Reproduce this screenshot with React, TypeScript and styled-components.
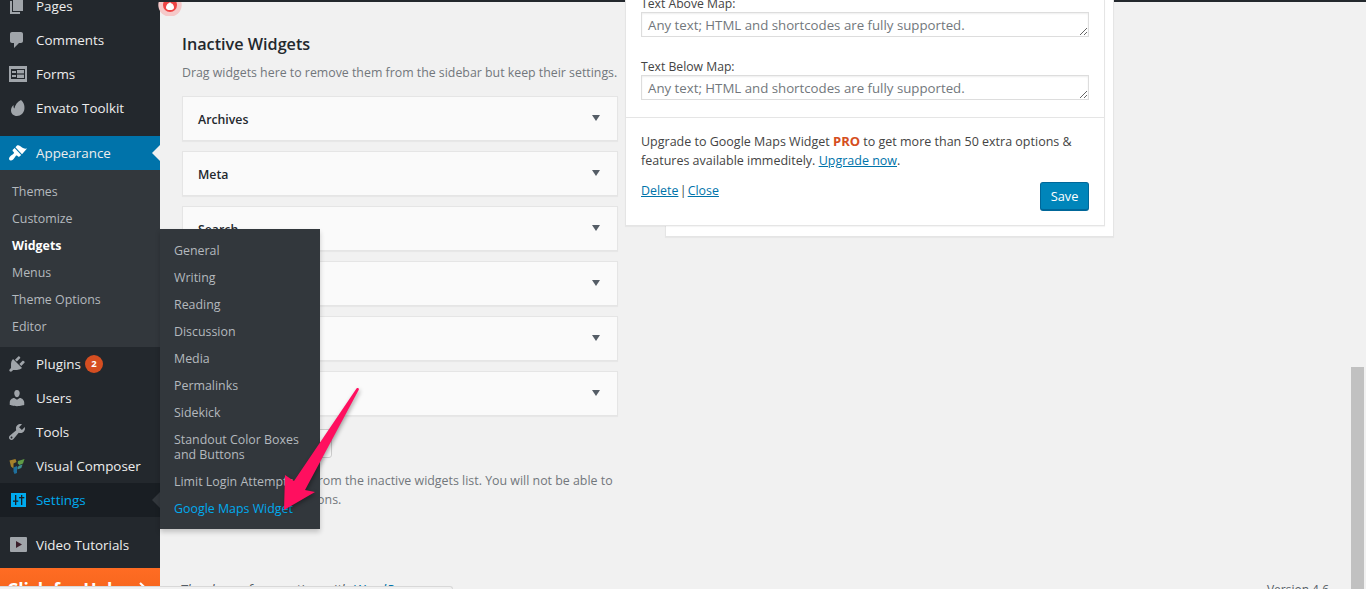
import React from "react";
import styled, { createGlobalStyle } from "styled-components";

const Global = createGlobalStyle`
  html, body { margin: 0; padding: 0; height: 589px; overflow: hidden; background: #f1f1f1; }
  * { box-sizing: border-box; }
  body { font-family: "Open Sans", "Noto Sans", sans-serif; font-size: 13px; color: #444; }
`;

const Page = styled.div`
  position: relative;
  display: flex;
  width: 1366px;
  height: 589px;
  overflow: hidden;
`;

const Sidebar = styled.nav`
  position: relative;
  flex: 0 0 160px;
  display: flex;
  flex-direction: column;
  background: #23282d;
  margin-top: -11px;
`;

const MenuItem = styled.div<{ $state?: "current" | "open" }>`
  position: relative;
  display: flex;
  align-items: center;
  flex: 0 0 34px;
  padding-left: 7px;
  gap: 9px;
  font-size: 13.4px;
  color: ${(p) => (p.$state === "open" ? "#00aaee" : "#eee")};
  background: ${(p) => (p.$state === "current" ? "#0073aa" : p.$state === "open" ? "#191e23" : "transparent")};
  svg { flex: 0 0 20px; }
  ${(p) =>
    p.$state
      ? `&::after {
          content: "";
          position: absolute;
          right: 0;
          top: 50%;
          margin-top: -8px;
          border: 8px solid transparent;
          border-left-width: 0;
          border-right-color: ${p.$state === "current" ? "#f1f1f1" : "#32373c"};
        }`
      : ""}
`;

const Separator = styled.div`
  flex: 0 0 11px;
`;

const SubMenu = styled.div`
  display: flex;
  flex-direction: column;
  background: #32373c;
  padding: 8px 0 7px;
`;

const SubItem = styled.div<{ $bold?: boolean; $active?: boolean; $inset?: boolean }>`
  padding: 6px ${(p) => (p.$inset ? "14px" : "12px")};
  font-size: 12.4px;
  line-height: 15px;
  font-weight: ${(p) => (p.$bold ? 700 : 400)};
  color: ${(p) => (p.$active ? "#00aaee" : p.$bold ? "#fff" : "#b4b9be")};
`;

const Flyout = styled(SubMenu)`
  position: absolute;
  left: 160px;
  top: 229px;
  width: 160px;
  z-index: 5;
  box-shadow: 0 3px 5px rgba(0, 0, 0, 0.2);
`;

const HelpBar = styled.div`
  margin-top: 6px;
  flex: 0 0 40px;
  display: flex;
  justify-content: space-between;
  align-items: flex-start;
  padding: 9px 12px 0 7px;
  background: linear-gradient(#ff6c23, #f0621a);
  color: #fff;
  font-size: 17.5px;
  font-weight: 700;
  line-height: 24px;
`;

const HelpChevron = styled.svg`
  margin-top: 5px;
`;

const Badge = styled.span`
  display: inline-block;
  width: 18px;
  height: 18px;
  border-radius: 50%;
  margin-left: -5px;
  background: #d54e21;
  color: #fff;
  font-size: 9.5px;
  font-weight: 700;
  line-height: 18px;
  text-align: center;
`;

const Main = styled.main`
  flex: 1;
  display: flex;
  flex-direction: column;
  border-top: 2px solid #23282d;
  min-width: 0;
`;

const Columns = styled.div`
  flex: 1;
  display: flex;
  align-items: flex-start;
  min-height: 0;
`;

const LeftColumn = styled.section`
  flex: 0 0 436px;
  margin-left: 22px;
  padding-top: 30px;
`;

const Heading = styled.h2`
  margin: 0 0 7px;
  font-size: 16.2px;
  line-height: 24px;
  font-weight: 600;
  color: #23282d;
`;

const Description = styled.p`
  margin: 0 0 13px;
  font-size: 12.35px;
  line-height: 20px;
  color: #72777c;
  white-space: nowrap;
`;

const WidgetList = styled.div`
  display: flex;
  flex-direction: column;
  gap: 10px;
`;

const WidgetRow = styled.div`
  display: flex;
  align-items: center;
  justify-content: space-between;
  height: 45px;
  padding: 2px 17px 0 15px;
  background: #fafafa;
  border: 1px solid #e5e5e5;
  box-shadow: 0 1px 1px rgba(0, 0, 0, 0.04);
  font-size: 12.3px;
  font-weight: 600;
  color: #23282d;
`;

const Caret = styled.span`
  width: 0;
  height: 0;
  margin-top: -4px;
  border-left: 4.5px solid transparent;
  border-right: 4.5px solid transparent;
  border-top: 6px solid #555d66;
`;

const ClearButton = styled.button`
  display: block;
  margin-top: 13px;
  width: 150px;
  height: 29px;
  border: 1px solid #ccc;
  border-radius: 3px;
  background: #f7f7f7;
  font: inherit;
  color: #555;
`;

const Note = styled.p`
  margin: 13px 0 0;
  font-size: 12.4px;
  line-height: 19px;
  color: #72777c;
`;

const Holder = styled.section`
  margin: -2px 0 0 47px;
  width: 449px;
  background: #fff;
  border-right: 1px solid #e5e5e5;
  border-bottom: 1px solid #e5e5e5;
  border-left: 1px solid #e5e5e5;
  box-shadow: 0 1px 1px rgba(0, 0, 0, 0.04);
  padding-bottom: 10px;
`;

const Card = styled.div`
  margin-left: -41px;
  width: 480px;
  height: 226px;
  display: flex;
  flex-direction: column;
  background: #fff;
  border: 1px solid #e5e5e5;
  border-top: 0;
  box-shadow: 0 1px 1px rgba(0, 0, 0, 0.04);
`;

const Fields = styled.div`
  padding: 0 15px;
  border-bottom: 1px solid #e5e5e5;
  margin-top: -6px;
  flex: 0 0 124px;
  min-height: 0;
`;

const Label = styled.label`
  display: block;
  height: 18px;
  font-size: 12.2px;
  line-height: 20px;
  color: #444;
`;

const Area = styled.textarea`
  display: block;
  width: 448px;
  height: 25px;
  margin-bottom: 20px;
  padding: 3px 6px 1px;
  resize: vertical;
  overflow: hidden;
  border: 1px solid #ddd;
  box-shadow: inset 0 1px 2px rgba(0, 0, 0, 0.07);
  font-family: inherit;
  font-size: 13.25px;
  line-height: 19px;
  color: #32373c;
  background: #fff;
  &::placeholder { color: #72777c; opacity: 1; }
`;

const Upgrade = styled.p`
  margin: 14px 15px 0;
  font-size: 12.5px;
  line-height: 19px;
  color: #444;
  strong { color: #d54e21; font-size: 13px; }
`;

const Link = styled.a`
  color: #0073aa;
  text-decoration: underline;
`;

const Actions = styled.div`
  display: flex;
  justify-content: space-between;
  align-items: flex-start;
  margin: 11px 15px 0;
  font-size: 12.4px;
  line-height: 19px;
  span { word-spacing: -2px; }
`;

const SaveButton = styled.button`
  margin-top: 1px;
  width: 49px;
  height: 29px;
  padding: 0;
  background: #0085ba;
  border: 1px solid #006799;
  border-bottom-width: 2px;
  border-radius: 3px;
  color: #fff;
  font-family: inherit;
  font-size: 12.8px;
`;

const Footer = styled.footer`
  flex: 0 0 20px;
  margin-bottom: -11px;
  display: flex;
  justify-content: space-between;
  padding: 0 37px 0 20px;
  font-size: 12px;
  line-height: 20px;
  color: #555d66;
  em { font-size: 14px; }
  em a { color: #0073aa; text-decoration: underline; }
`;

const BottomStrip = styled.div`
  position: absolute;
  left: 0;
  bottom: 0;
  width: 453px;
  height: 3px;
  z-index: 6;
  background: #f1f1f1;
  border-top: 1px solid #d8d8d8;
  border-right: 1px solid #d8d8d8;
  border-top-right-radius: 4px;
`;

const ScrollThumb = styled.div`
  position: absolute;
  right: 2px;
  top: 367px;
  bottom: 0;
  width: 13px;
  background: #c1c1c1;
`;

const Flame = styled.svg`
  position: absolute;
  left: 158px;
  top: 2px;
  z-index: 4;
`;

const Arrow = styled.svg`
  position: absolute;
  left: 270px;
  top: 380px;
  z-index: 7;
  filter: drop-shadow(1px 2px 2px rgba(0, 0, 0, 0.35));
`;

const grey = "#a0a5aa";
const Icon: React.FC<{ d: string; color?: string }> = ({ d, color = grey }) => (
  <svg width="20" height="20" viewBox="0 0 20 20">
    <path d={d} fill={color} />
  </svg>
);

const paths = {
  pages: "M6 15V2h10v13H6zm-1 1h8v2H3V5h2v11z",
  comments: "M5 2h9c1.1 0 2 .9 2 2v7c0 1.1-.9 2-2 2h-2l-5 5v-5H5c-1.1 0-2-.9-2-2V4c0-1.1.9-2 2-2z",
  plugins:
    "M13.11 4.36L9.87 7.6 8 5.73l3.24-3.24c.35-.34 1.05-.2 1.56.32.52.51.66 1.21.31 1.55zm-8 1.77l.91-1.12 9.01 9.01-1.19.84c-.71.71-2.63 1.16-3.82 1.16H6.14L4.9 17.26c-.59.59-1.54.59-2.12 0-.59-.58-.59-1.53 0-2.12l1.24-1.24v-3.88c0-1.13.4-3.19 1.09-3.89zm7.26 3.97l3.24-3.24c.34-.35 1.04-.21 1.55.31.52.51.66 1.21.31 1.55l-3.24 3.25z",
  users:
    "M10 9.25c-2.27 0-2.73-3.44-2.73-3.44C7 4.02 7.82 2 9.97 2c2.16 0 2.98 2.02 2.71 3.81 0 0-.41 3.44-2.68 3.44zm0 2.57L12.72 10c2.39 0 4.52 2.33 4.52 4.53v2.49s-3.65 1.13-7.24 1.13c-3.65 0-7.24-1.13-7.24-1.13v-2.49c0-2.25 1.94-4.48 4.47-4.48z",
  tools:
    "M16.68 9.77c-1.34 1.34-3.3 1.67-4.95.99l-5.41 6.52c-.99.99-2.59.99-3.58 0s-.99-2.59 0-3.57l6.52-5.42c-.68-1.65-.35-3.61.99-4.95 1.28-1.28 3.12-1.62 4.72-1.06l-2.89 2.89 2.82 2.82 2.86-2.87c.53 1.58.18 3.39-1.08 4.65zM3.81 16.21c.4.39 1.04.39 1.43 0 .4-.4.4-1.04 0-1.43-.39-.4-1.03-.4-1.43 0-.39.39-.39 1.03 0 1.43z",
  envato:
    "M14 2c2 1.500 4 5 3.400 9-.5 4-3.500 7-7.500 7C6.500 18 4 15.500 4 12.500c0-2.500 1.200-4.500 2.600-5.500-.2 1.500 0 3 .8 3.500C8 7 10.500 3.500 14 2z",
};

const SettingsIcon = () => (
  <svg width="20" height="20" viewBox="0 0 20 20">
    <rect x="4" y="3" width="15" height="14" fill="#00aaee" />
    <g fill="#191e23">
      <rect x="8" y="5" width="1.300" height="10" />
      <rect x="6" y="10.500" width="5.300" height="1.300" />
      <rect x="14" y="5" width="1.300" height="10" />
      <rect x="12" y="7" width="5.300" height="1.300" />
    </g>
  </svg>
);

const FormsIcon = () => (
  <svg width="20" height="20" viewBox="0 0 20 20">
    <rect x="2" y="2" width="18" height="16" fill={grey} />
    <rect x="4" y="5" width="14" height="10" fill="#23282d" />
    <rect x="5" y="7" width="4" height="2" fill={grey} />
    <rect x="5" y="11" width="4" height="2" fill={grey} />
    <rect x="10" y="6" width="7" height="3.4" fill={grey} />
    <rect x="10" y="10.6" width="7" height="3.4" fill={grey} />
  </svg>
);

const BrushIcon = () => (
  <svg width="20" height="20" viewBox="0 0 20 20">
    <path
      fill="#fff"
      d="M15 11.200L8.400 4.200l1.600-1.600c.7-.6 2-.4 3 .3 1.200.8 1.600 1.400 3 2.100 1 .5 2.500 1 4 .6zM14.200 12L7.600 5 5.800 6.800c-.4.4-.4 1 0 1.400l.9.9c.4.4.4 1 0 1.400-.6.6-1.500 1.200-2.300 1.800-.4.3-.8.6-1.100.9-1 1-1.600 2.400-1.100 3.400.3.6 1 1 1.800.9 1.400-.1 2.400-1.200 3.300-2.500.5-.7 1-1.600 1.600-2.300.4-.4 1-.4 1.400 0l.8.8c.4.4 1 .4 1.400 0z"
    />
  </svg>
);

const ComposerIcon = () => (
  <svg width="20" height="20" viewBox="0 0 20 20">
    <path fill="#a5812a" d="M2.500 4.500l6-1.500 1 3-3 1.500v5L4 10.500z" />
    <path fill="#5f9b45" d="M11 5l6.500-2-1.500 4.500-3.500 1.500-1.800-1.500z" />
    <path fill="#3f8f8f" d="M12.500 9.500l3-1-1.200 3.500-3.800 1.500v-2.400z" />
    <path fill="#1f6f9c" d="M6.500 11.500l3.500-1.500v7l-2.500 1-1-2.400z" />
  </svg>
);

const VideoIcon = () => (
  <svg width="20" height="20" viewBox="0 0 20 20">
    <rect x="3" y="2" width="17" height="15" rx="1" fill={grey} />
    <path d="M9 6l6 3.500L9 13z" fill="#3b1f2b" />
  </svg>
);

const settingsItems = ["General", "Writing", "Reading", "Discussion", "Media", "Permalinks", "Sidekick"];

export default function App() {
  return (
    <Page>
      <Global />
      <Sidebar>
        <MenuItem><Icon d={paths.pages} />Pages</MenuItem>
        <MenuItem><Icon d={paths.comments} />Comments</MenuItem>
        <MenuItem><FormsIcon />Forms</MenuItem>
        <MenuItem><Icon d={paths.envato} />Envato Toolkit</MenuItem>
        <Separator />
        <MenuItem $state="current"><BrushIcon />Appearance</MenuItem>
        <SubMenu>
          <SubItem>Themes</SubItem>
          <SubItem>Customize</SubItem>
          <SubItem $bold>Widgets</SubItem>
          <SubItem>Menus</SubItem>
          <SubItem>Theme Options</SubItem>
          <SubItem>Editor</SubItem>
        </SubMenu>
        <MenuItem><Icon d={paths.plugins} />Plugins <Badge>2</Badge></MenuItem>
        <MenuItem><Icon d={paths.users} />Users</MenuItem>
        <MenuItem><Icon d={paths.tools} />Tools</MenuItem>
        <MenuItem><ComposerIcon />Visual Composer</MenuItem>
        <MenuItem $state="open"><SettingsIcon />Settings</MenuItem>
        <Separator />
        <MenuItem><VideoIcon />Video Tutorials</MenuItem>
        <HelpBar>
          <span>Click for Help</span>
          <HelpChevron width="9" height="14" viewBox="0 0 9 14">
            <path d="M1 1l6.500 6L1 13" fill="none" stroke="#fff" strokeWidth="2.200" />
          </HelpChevron>
        </HelpBar>
      </Sidebar>

      <Flyout>
        {settingsItems.map((s) => (
          <SubItem $inset key={s}>{s}</SubItem>
        ))}
        <SubItem $inset>Standout Color Boxes and Buttons</SubItem>
        <SubItem $inset>Limit Login Attempts</SubItem>
        <SubItem $inset $active>Google Maps Widget</SubItem>
      </Flyout>

      <Main>
        <Columns>
          <LeftColumn>
            <Heading>Inactive Widgets</Heading>
            <Description>Drag widgets here to remove them from the sidebar but keep their settings.</Description>
            <WidgetList>
              {["Archives", "Meta", "Search", "Text", "Calendar", "Categories"].map((w) => (
                <WidgetRow key={w}>
                  {w}
                  <Caret />
                </WidgetRow>
              ))}
            </WidgetList>
            <ClearButton>Clear Inactive Widgets</ClearButton>
            <Note>This will clear all items from the inactive widgets list. You will not be able to restore any customizations.</Note>
          </LeftColumn>
          <Holder>
            <Card>
              <Fields>
                <Label>Text Above Map:</Label>
                <Area placeholder="Any text; HTML and shortcodes are fully supported." />
                <Label>Text Below Map:</Label>
                <Area placeholder="Any text; HTML and shortcodes are fully supported." />
              </Fields>
              <Upgrade>
                Upgrade to Google Maps Widget <strong>PRO</strong> to get more than 50 extra options &amp; features available immeditely. <Link>Upgrade now</Link>.
              </Upgrade>
              <Actions>
                <span><Link>Delete</Link> | <Link>Close</Link></span>
                <SaveButton>Save</SaveButton>
              </Actions>
            </Card>
          </Holder>
        </Columns>
        <Footer>
          <em>Thank you for creating with <a>WordPress</a>.</em>
          <span>Version 4.6</span>
        </Footer>
      </Main>

      <Flame width="24" height="14" viewBox="0 8 24 14">
        <circle cx="12" cy="11" r="11.700" fill="#f6c9c9" />
        <circle cx="12" cy="11" r="7" fill="#ef4444" />
        <path d="M12 8c.5 1 1 1.500 1.500 1 .1.8.3 1 .8.7 1 1 1.700 2.500 1.700 3.800 0 2-1.700 2.500-4 2.500s-4-.5-4-2.500c0-1.500.8-3 1.700-3.800.4.3.7 0 .8-.7.5.5 1 0 1.500-1z" fill="#fff" />
      </Flame>

      <Arrow width="100" height="150" viewBox="0 0 100 150">
        <path
          d="M86.500 8.500c1-1 2.800-.2 2.300 1.200L35 110l10 2-31 18 1-35 9 6z"
          fill="#ff0f5f"
        />
      </Arrow>

      <BottomStrip />
      <ScrollThumb />
    </Page>
  );
}
